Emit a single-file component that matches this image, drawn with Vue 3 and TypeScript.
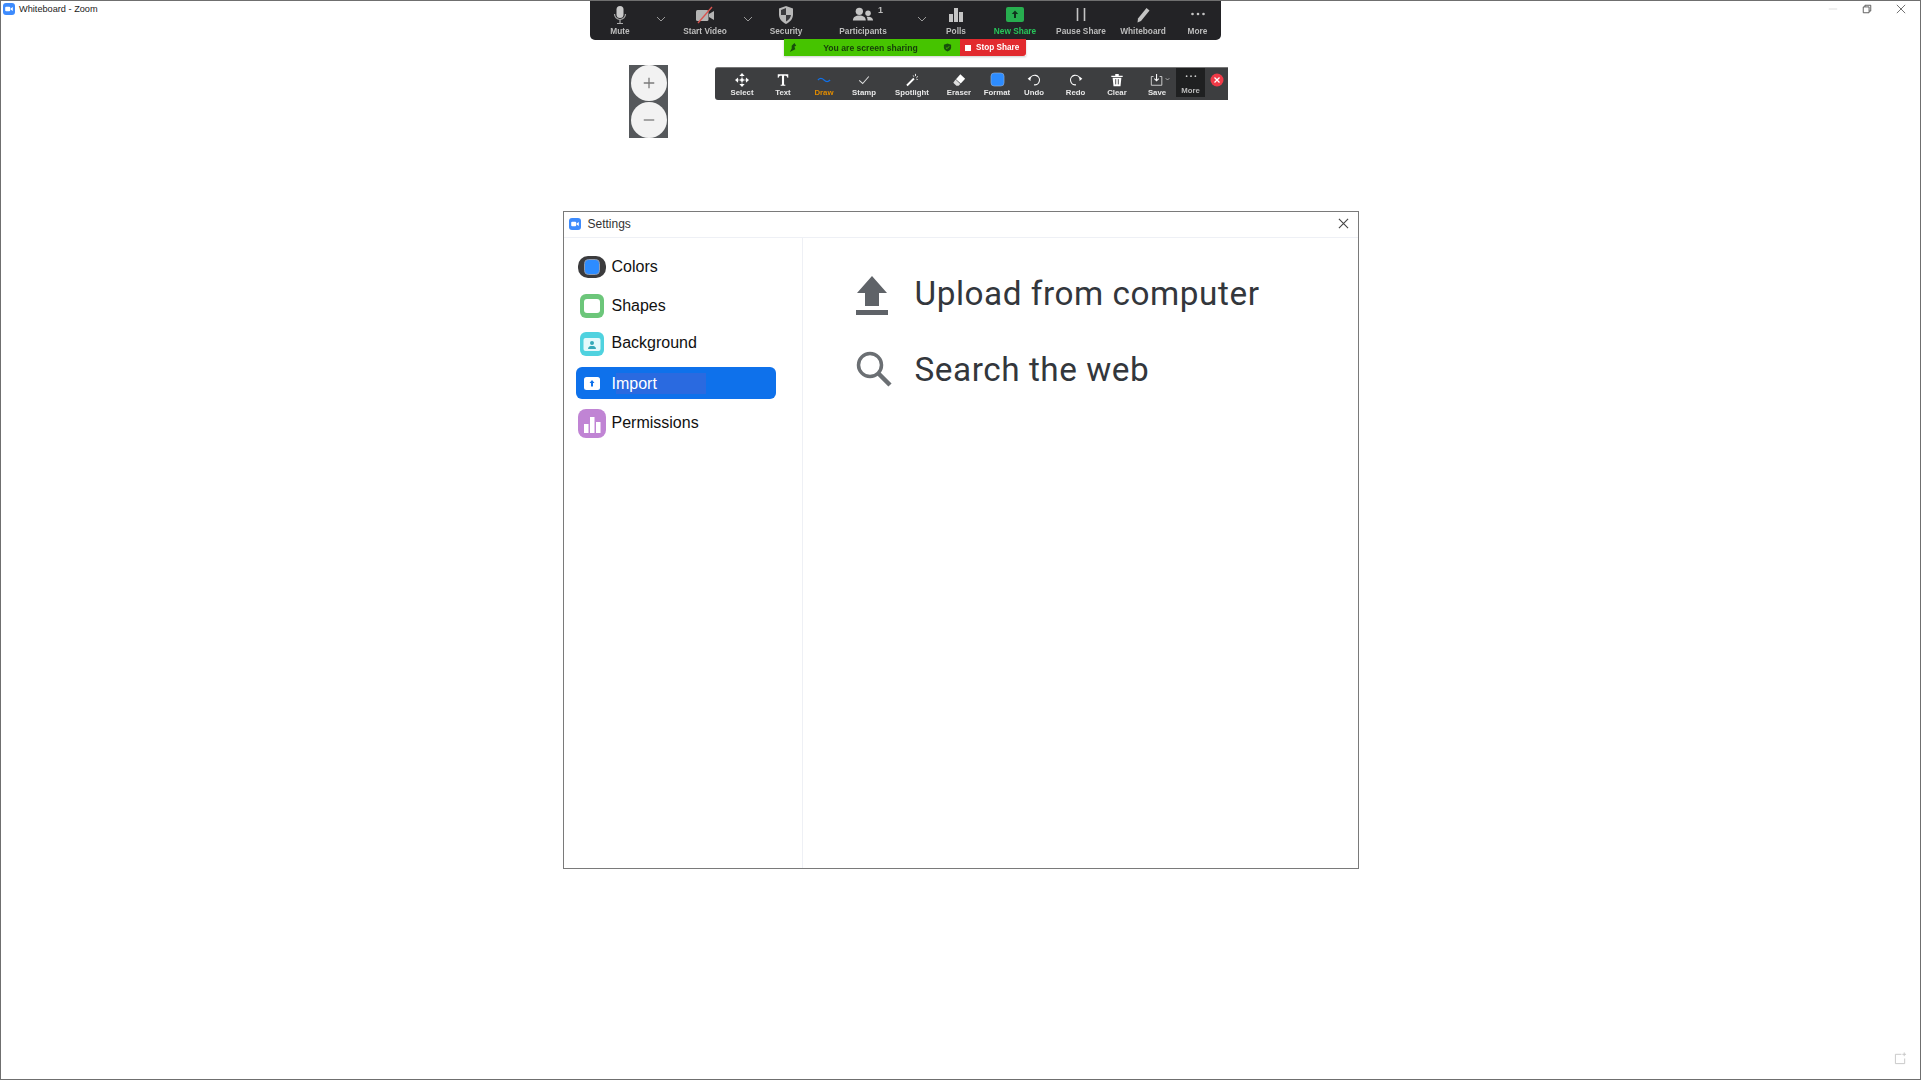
<template>
  <div class="page">
    <div class="titlebar">
      <svg class="app-icon" viewBox="0 0 12 12">
        <rect width="12" height="12" rx="3" fill="#3d8bfd" />
        <rect x="2.2" y="3.8" width="5" height="4.4" rx="1" fill="#fff" />
        <path d="M7.6 5.4 9.8 4v4L7.6 6.6z" fill="#fff" />
      </svg>
      <span class="app-title">Whiteboard - Zoom</span>
      <div class="win-controls">
        <svg viewBox="0 0 12 12" class="win-min"><path d="M1 6h10" stroke="#d6d6d6" /></svg>
        <svg viewBox="0 0 12 12"><path d="M1.5 3.5h7v7h-7zM3.5 3.5v-2h7v7h-2" fill="none" stroke="#444" /></svg>
        <svg viewBox="0 0 12 12"><path d="M1 1l10 10M11 1 1 11" stroke="#555" fill="none" /></svg>
      </div>
    </div>

    <!-- meeting controls -->
    <div class="meeting-bar">
      <div class="mb-item">
        <svg viewBox="0 0 20 20"><rect x="6.5" y="1" width="7" height="12" rx="3.5" fill="#c9c9c9" /><path d="M4.5 9a5.500 5.500 0 0 0 11 0M10 15v3M7 18.500h6" fill="none" stroke="#aaa" stroke-width="1.200" /></svg>
        <span>Mute</span>
      </div>
      <div class="mb-chev"><svg viewBox="0 0 10 6"><path d="M1 1l4 4 4-4" fill="none" stroke="#9a9a9a" /></svg></div>
      <div class="mb-item">
        <svg viewBox="0 0 20 20"><rect x="1" y="5" width="12.500" height="11" rx="1.500" fill="#b4b4b4" /><path d="M14 9l5-3v9l-5-3z" fill="#b4b4b4" /><path d="M3 18 17 2" stroke="#d9534f" stroke-width="1.300" /></svg>
        <span>Start Video</span>
      </div>
      <div class="mb-chev"><svg viewBox="0 0 10 6"><path d="M1 1l4 4 4-4" fill="none" stroke="#9a9a9a" /></svg></div>
      <div class="mb-item">
        <svg viewBox="0 0 20 20"><path d="M10 1l7 2.500v6c0 4.500-3 7.500-7 9.500-4-2-7-5-7-9.500v-6z" fill="#b8b8b8" /><path d="M10 3v7h5c-.3 3-2.300 5-5 6.500V10H5V5z" fill="#3a3a3d" /></svg>
        <span>Security</span>
      </div>
      <div class="mb-item">
        <div class="participants">
          <svg viewBox="0 0 24 20"><circle cx="8" cy="6" r="4" fill="#c4c4c4" /><path d="M1 16c0-4 3-5.500 7-5.500s7 1.500 7 5.500z" fill="#c4c4c4" /><circle cx="17.500" cy="8" r="3" fill="#c4c4c4" /><path d="M16 12c4-.6 7 .8 7 4h-6c0-1.600-.3-3-1-4z" fill="#c4c4c4" /></svg>
          <em>1</em>
        </div>
        <span>Participants</span>
      </div>
      <div class="mb-chev"><svg viewBox="0 0 10 6"><path d="M1 1l4 4 4-4" fill="none" stroke="#9a9a9a" /></svg></div>
      <div class="mb-item">
        <svg viewBox="0 0 20 20"><path d="M3 9h4v8H3zM8 3h4v14H8zM13 7h4v10h-4z" fill="#c4c4c4" /></svg>
        <span>Polls</span>
      </div>
      <div class="mb-item mb-item--share">
        <svg viewBox="0 0 20 20"><rect x="1" y="2" width="18" height="15" rx="2" fill="#27ae4f" /><path d="M10 5.500 6.800 9h2.200v4h2V9h2.200z" fill="#10331d" /></svg>
        <span>New Share</span>
      </div>
      <div class="mb-item">
        <svg viewBox="0 0 20 20"><path d="M6.500 3v13M13.500 3v13" stroke="#c4c4c4" stroke-width="1.600" /></svg>
        <span>Pause Share</span>
      </div>
      <div class="mb-item">
        <svg viewBox="0 0 20 20"><path d="M5 13.500 13.500 3l3 2.500L8 16l-3.500 1.500z" fill="#c4c4c4" /></svg>
        <span>Whiteboard</span>
      </div>
      <div class="mb-item">
        <svg viewBox="0 0 20 20"><circle cx="4.500" cy="9" r="1.300" fill="#c4c4c4" /><circle cx="10" cy="9" r="1.300" fill="#c4c4c4" /><circle cx="15.500" cy="9" r="1.300" fill="#c4c4c4" /></svg>
        <span>More</span>
      </div>
    </div>

    <div class="share-banner">
      <div class="share-green">
        <svg class="sb-pin" viewBox="0 0 10 10"><path d="M6 0 8 3 6 4 7 7 3 9 1 10 3 6 3 3z" fill="#174f0b" /></svg>
        <span>You are screen sharing</span>
        <svg class="sb-shield" viewBox="0 0 10 10"><path d="M5 .5 9 2v3c0 2.200-1.800 3.600-4 4.500C2.800 8.600 1 7.200 1 5V2z" fill="#174f0b" /><path d="M3.200 5l1.300 1.300 2.300-2.600" stroke="#4ac400" fill="none" /></svg>
      </div>
      <div class="share-stop"><i></i><span>Stop Share</span></div>
    </div>

    <!-- zoom buttons -->
    <div class="zoom-panel">
      <button class="zoom-btn"><svg viewBox="0 0 16 16"><path d="M8 2v12M2 8h12" stroke="#7b7b7b" stroke-width="1.500" /></svg></button>
      <button class="zoom-btn"><svg viewBox="0 0 16 16"><path d="M2 8h12" stroke="#7b7b7b" stroke-width="1.500" /></svg></button>
    </div>

    <!-- annotate toolbar -->
    <div class="annotate-bar">
      <div class="an-item">
        <svg viewBox="0 0 16 16"><path d="M8 0 11 3.500H5zM8 16 5 12.500h6zM0 8 3.500 5v6zM16 8 12.500 11V5z" fill="#fff" /><circle cx="8" cy="8" r="2" fill="#fff" /><path d="M8 3v10M3 8h10" stroke="#fff" stroke-width=".7" /></svg>
        <span>Select</span>
      </div>
      <div class="an-item">
        <svg viewBox="0 0 16 16"><path d="M2 1.500h12v4h-1c-.3-1.600-1-2.300-3-2.300H9.200v9.300c0 .8.400 1 1.500 1v1h-5.400v-1c1.100 0 1.500-.2 1.500-1V3.200H6c-2 0-2.700.7-3 2.300H2z" fill="#fff" /></svg>
        <span>Text</span>
      </div>
      <div class="an-item an-item--active">
        <svg viewBox="0 0 16 16"><path d="M1 8c2.500-2.500 4.500-2.500 7 0s4.500 2.500 7 0" fill="none" stroke="#1170e8" stroke-width="1.300" /></svg>
        <span>Draw</span>
      </div>
      <div class="an-item">
        <svg viewBox="0 0 16 16"><path d="M2.500 8.500 6.500 12l7-8" fill="none" stroke="#ddd" stroke-width="1.200" /></svg>
        <span>Stamp</span>
      </div>
      <div class="an-item">
        <svg viewBox="0 0 16 16"><path d="M3 15 1.500 13.500 9.500 5.500l1.500 1.500z" fill="#fff" /><path d="M12 1v2.500M14.800 4l-1.800 1M9 3l1.500 1M14.500 7.500l-1.500-.5" stroke="#fff" /></svg>
        <span>Spotlight</span>
      </div>
      <div class="an-item">
        <svg viewBox="0 0 16 16"><path d="M9.500 1.500 15 6.500 10 12 4.500 7z" fill="#fff" /><path d="M4 7.500 9.500 12.500 7.500 14.500H5L1.500 11z" fill="#ddd" /></svg>
        <span>Eraser</span>
      </div>
      <div class="an-item">
        <svg class="an-format" viewBox="0 0 16 16"><rect x="1" y="1" width="14" height="14" rx="3.500" fill="#2d8cff" stroke="#9fb6d6" stroke-width=".6" /></svg>
        <span>Format</span>
      </div>
      <div class="an-item">
        <svg viewBox="0 0 16 16"><path d="M3.500 6.500A5.500 5.500 0 1 1 8 13.500" fill="none" stroke="#fff" stroke-width="1.200" /><path d="M.8 6.500 4 4v5z" fill="#fff" /></svg>
        <span>Undo</span>
      </div>
      <div class="an-item">
        <svg viewBox="0 0 16 16"><path d="M12.500 6.500A5.500 5.500 0 1 0 8 13.500" fill="none" stroke="#fff" stroke-width="1.200" /><path d="M15.200 6.500 12 4v5z" fill="#fff" /></svg>
        <span>Redo</span>
      </div>
      <div class="an-item">
        <svg viewBox="0 0 16 16"><path d="M1.500 3h13v1.500h-13zM6 1h4v2H6zM3 5.500h10L12 15H4z" fill="#fff" /><path d="M6.500 7v6M9.500 7v6" stroke="#3d3e40" /></svg>
        <span>Clear</span>
      </div>
      <div class="an-item an-item--save">
        <svg class="an-save" viewBox="0 0 24 16"><path d="M4 4H1.500v10h12V4H11" fill="none" stroke="#ddd" /><path d="M7.500 1v8M5 6.500l2.500 2.500L10 6.500" fill="none" stroke="#fff" stroke-width="1.200" /><path d="M18 6l2 2 2-2" fill="none" stroke="#bbb" /></svg>
        <span>Save</span>
      </div>
      <div class="an-item an-more">
        <svg viewBox="0 0 16 16"><circle cx="3" cy="7" r="1" fill="#ccc" /><circle cx="8" cy="7" r="1" fill="#ccc" /><circle cx="13" cy="7" r="1" fill="#ccc" /></svg>
        <span>More</span>
      </div>
      <div class="an-close">
        <svg viewBox="0 0 14 14"><circle cx="7" cy="7" r="6.500" fill="#f03a47" /><path d="M4.500 4.500l5 5M9.500 4.500l-5 5" stroke="#fff" stroke-width="1.300" /></svg>
      </div>
    </div>

    <!-- settings dialog -->
    <div class="dialog">
      <div class="dialog-title">
        <svg class="app-icon" viewBox="0 0 12 12">
          <rect width="12" height="12" rx="3" fill="#3d8bfd" />
          <rect x="2.200" y="3.800" width="5" height="4.400" rx="1" fill="#fff" />
          <path d="M7.600 5.400 9.800 4v4L7.600 6.600z" fill="#fff" />
        </svg>
        <span>Settings</span>
        <svg class="dialog-close" viewBox="0 0 12 12"><path d="M1 1l10 10M11 1 1 11" stroke="#444" stroke-width="1.200" /></svg>
      </div>
      <div class="dialog-body">
        <nav class="sidebar">
          <div class="nav-row nav-colors">
            <div class="nav-icon"><svg class="ic-colors" viewBox="0 0 28 22"><rect width="28" height="22" rx="10" fill="#3b3b3d" /><rect x="6.500" y="3.500" width="15" height="15" rx="4" fill="#2d8cff" stroke="#8f9bb0" /></svg></div>
            <span>Colors</span>
          </div>
          <div class="nav-row nav-shapes">
            <div class="nav-icon"><svg class="ic-shapes" viewBox="0 0 24 24"><rect width="24" height="24" rx="6" fill="#6cc67a" /><rect x="4" y="5" width="16" height="14" rx="3" fill="#fff" /></svg></div>
            <span>Shapes</span>
          </div>
          <div class="nav-row nav-background">
            <div class="nav-icon nav-icon--low"><svg class="ic-shapes" viewBox="0 0 24 24"><rect width="24" height="24" rx="6" fill="#4fd2df" /><rect x="3.500" y="6" width="17" height="13" rx="2" fill="#e4f9fb" /><circle cx="12" cy="11" r="2" fill="#35a9b8" /><path d="M8 17c0-2.500 2-3 4-3s4 .5 4 3z" fill="#35a9b8" /></svg></div>
            <span>Background</span>
          </div>
          <div class="nav-row nav-row--active">
            <div class="nav-icon"><svg class="ic-import" viewBox="0 0 16 13"><rect width="16" height="13" rx="2.500" fill="#fff" /><path d="M8 3 5.500 6H7v3.500h2V6h1.500z" fill="#0e71eb" /></svg></div>
            <span class="import-label">Import</span>
          </div>
          <div class="nav-row nav-permissions">
            <div class="nav-icon"><svg class="ic-perm" viewBox="0 0 28 29"><rect width="28" height="29" rx="8" fill="#c084d4" /><path d="M6 15h4.500v9H6zM12 8h4.500v16H12zM18 13h4.500v11H18z" fill="#fff" /></svg></div>
            <span>Permissions</span>
          </div>
        </nav>
        <section class="import-pane">
          <div class="import-row">
            <svg class="ic-upload ic-upload--arrow" viewBox="0 0 32 39"><path d="M16 0 31 17H23V30H9V17H1z" fill="#5f6368" /><rect y="34" width="32" height="5" fill="#5f6368" /></svg>
            <span>Upload from computer</span>
          </div>
          <div class="import-row import-row--search">
            <svg class="ic-upload" viewBox="0 0 36 36"><circle cx="14" cy="14" r="11.500" fill="none" stroke="#6b6f73" stroke-width="3.500" /><path d="M22.500 22.500 34 34" stroke="#6b6f73" stroke-width="4.500" /></svg>
            <span>Search the web</span>
          </div>
        </section>
      </div>
    </div>

    <svg class="corner-icon" viewBox="0 0 14 14"><path d="M8 2.500H1.500v10h10V7" fill="none" stroke="#c6c6c6" /><path d="M11 .5v4M9 2.500h4" stroke="#c6c6c6" /></svg>
  </div>
</template>

<script setup lang="ts">
</script>

<style>
html,
body {
  margin: 0;
  background: #fff;
}
</style>

<style scoped>
.page {
  position: relative;
  box-sizing: border-box;
  width: 1921px;
  height: 1080px;
  border: 1px solid #6f6f6f;
  background: #fff;
  overflow: hidden;
  display: flex;
  flex-direction: column;
  align-items: center;
  font-family: "Liberation Sans", Arial, sans-serif;
}

.titlebar {
  align-self: stretch;
  height: 15px;
  display: flex;
  align-items: center;
  padding-left: 2px;
  font-size: 9.200px;
  color: #222;
}
.app-icon {
  width: 12px;
  height: 12px;
  flex: none;
}
.app-title {
  margin-left: 4px;
}
.win-controls {
  margin-left: auto;
  display: flex;
  gap: 24px;
  margin-right: 14px;
}
.win-controls svg {
  width: 10px;
  height: 10px;
}
.win-min {
  opacity: 0.9;
}

.meeting-bar {
  position: absolute;
  top: -1px;
  left: 589px;
  width: 631px;
  height: 40px;
  box-sizing: border-box;
  border-top: 1px solid #777;
  background: #232326;
  border-radius: 0 0 5px 5px;
  display: grid;
  grid-template-columns: 60px 22px 66px 20px 56px 98px 20px 48px 70px 62px 62px 47px;
  filter: blur(0.5px);
}
.mb-item {
  display: flex;
  flex-direction: column;
  align-items: center;
  padding-top: 4px;
  color: #bdbdbd;
  font-size: 8.300px;
  font-weight: 700;
  white-space: nowrap;
}
.mb-item svg {
  width: 20px;
  height: 20px;
}
.mb-item span {
  margin-top: 1px;
}
.mb-item--share {
  color: #27c65a;
}
.mb-chev {
  display: flex;
  justify-content: center;
  padding-top: 15px;
}
.mb-chev svg {
  width: 10px;
  height: 6px;
}
.participants {
  position: relative;
  display: flex;
  height: 20px;
}
.participants svg {
  width: 22px;
}
.participants em {
  position: absolute;
  left: 26px;
  top: 0;
  font-style: normal;
  font-size: 9px;
}

.share-banner {
  position: absolute;
  top: 38px;
  left: 783px;
  display: flex;
  height: 17px;
  font-size: 8.600px;
  font-weight: 700;
  white-space: nowrap;
  box-shadow: 0 1px 2px rgba(0, 0, 0, 0.2);
  filter: blur(0.4px);
}
.share-green {
  width: 176px;
  background: #46c400;
  color: #17400a;
  display: flex;
  align-items: center;
  padding: 0 8px 0 5px;
  box-sizing: border-box;
}
.sb-pin,
.sb-shield {
  width: 9px;
  height: 9px;
  flex: none;
}
.share-green span {
  margin: 0 auto;
}
.share-stop {
  width: 66px;
  background: #e22a2e;
  color: #fff;
  display: flex;
  align-items: center;
  gap: 5px;
  padding-left: 5px;
  box-sizing: border-box;
  border-radius: 0 0 3px 0;
  font-size: 8.200px;
}
.share-stop i {
  width: 6px;
  height: 6px;
  background: #fff;
  flex: none;
}

.zoom-panel {
  position: absolute;
  top: 64px;
  left: 628px;
  width: 39px;
  height: 73px;
  background: #55585b;
  display: flex;
  flex-direction: column;
  align-items: center;
  gap: 1px;
  filter: blur(0.4px);
}
.zoom-btn {
  width: 36px;
  height: 36px;
  padding: 0;
  border: none;
  border-radius: 50%;
  background: #f2f2f2;
  display: flex;
  align-items: center;
  justify-content: center;
}
.zoom-btn svg {
  width: 14px;
  height: 14px;
}

.annotate-bar {
  position: absolute;
  top: 66px;
  left: 714px;
  width: 513px;
  height: 33px;
  box-sizing: border-box;
  padding-left: 7px;
  background: #3d3e40;
  border-top: 1px solid #777;
  border-radius: 3px 0 0 3px;
  display: grid;
  grid-template-columns: 40px 42px 40px 40px 56px 38px 38px 36px 47px 36px 41px 29px 22px;
  filter: blur(0.4px);
}
.an-item {
  display: flex;
  flex-direction: column;
  align-items: center;
  padding-top: 5px;
  color: #e8e8e8;
  font-size: 7.800px;
  font-weight: 700;
  white-space: nowrap;
}
.an-item svg {
  width: 14px;
  height: 14px;
}
.an-item span {
  margin-top: 1px;
}
.an-item .an-format {
  width: 15px;
  height: 15px;
  margin-top: -1px;
}
.an-item--save {
  padding-left: 3px;
}
.an-item .an-save {
  width: 21px;
  margin-left: 7px;
}
.an-item--active {
  color: #e28c00;
}
.an-more {
  background: #1f2021;
  color: #bbb;
  height: 29px;
  padding-top: 2px;
  box-sizing: border-box;
}
.an-more span {
  margin-top: 2px;
}
.an-close {
  display: flex;
  justify-content: center;
  padding: 5px 0 0 1px;
}
.an-close svg {
  width: 14px;
  height: 14px;
}

.dialog {
  margin-top: 195px;
  width: 796px;
  height: 658px;
  box-sizing: border-box;
  border: 1px solid #7a7a7a;
  background: #fff;
  display: flex;
  flex-direction: column;
}
.dialog-title {
  height: 26px;
  flex: none;
  border-bottom: 1px solid #eef0f5;
  display: flex;
  align-items: center;
  padding: 0 9px 2px 5px;
  box-sizing: border-box;
  font-size: 12px;
  color: #333;
}
.dialog-title span {
  margin-left: 7px;
}
.dialog-close {
  margin-left: auto;
  width: 11px;
  height: 11px;
}
.dialog-body {
  flex: 1;
  display: flex;
  min-height: 0;
}
.sidebar {
  width: 239px;
  box-sizing: border-box;
  border-right: 1px solid #eef0f5;
  padding: 13px 0 0 12px;
  display: flex;
  flex-direction: column;
  font-size: 16px;
  color: #111;
}
.nav-row {
  width: 200px;
  height: 32px;
  display: flex;
  align-items: center;
  flex: none;
}
.nav-icon {
  width: 32px;
  margin-right: 4px;
  flex: none;
  display: flex;
  justify-content: center;
}
.nav-icon--low {
  margin-top: 2px;
}
.nav-shapes {
  margin-top: 7px;
}
.nav-background {
  margin-top: 5px;
}
.nav-row--active {
  margin-top: 8px;
  background: #0e71eb;
  border-radius: 6px;
  color: #fff;
}
.nav-permissions {
  margin-top: 8px;
}
.import-label {
  background: #2a6ae0;
  width: 90px;
  height: 21px;
  line-height: 21px;
  margin-left: 4px;
  text-indent: -4px;
}
.ic-colors {
  width: 28px;
  height: 22px;
}
.ic-shapes {
  width: 24px;
  height: 24px;
}
.ic-import {
  width: 16px;
  height: 13px;
}
.ic-perm {
  width: 28px;
  height: 29px;
}

.import-pane {
  flex: 1;
  display: flex;
  flex-direction: column;
  padding: 35px 0 0 53px;
}
.import-row {
  display: flex;
  align-items: center;
  height: 40px;
  font-family: Roboto, "Liberation Sans", sans-serif;
  font-size: 33.300px;
  letter-spacing: 0.55px;
  color: #33373c;
}
.import-row--search {
  margin-top: 36px;
}
.ic-upload {
  width: 32px;
  height: 39px;
  flex: none;
  margin-right: 27px;
}
.ic-upload--arrow {
  margin-top: 4px;
}
.import-row--search .ic-upload {
  height: 36px;
  width: 36px;
  margin-right: 23px;
}

.corner-icon {
  position: absolute;
  right: 13px;
  bottom: 14px;
  width: 13px;
  height: 13px;
}
</style>
